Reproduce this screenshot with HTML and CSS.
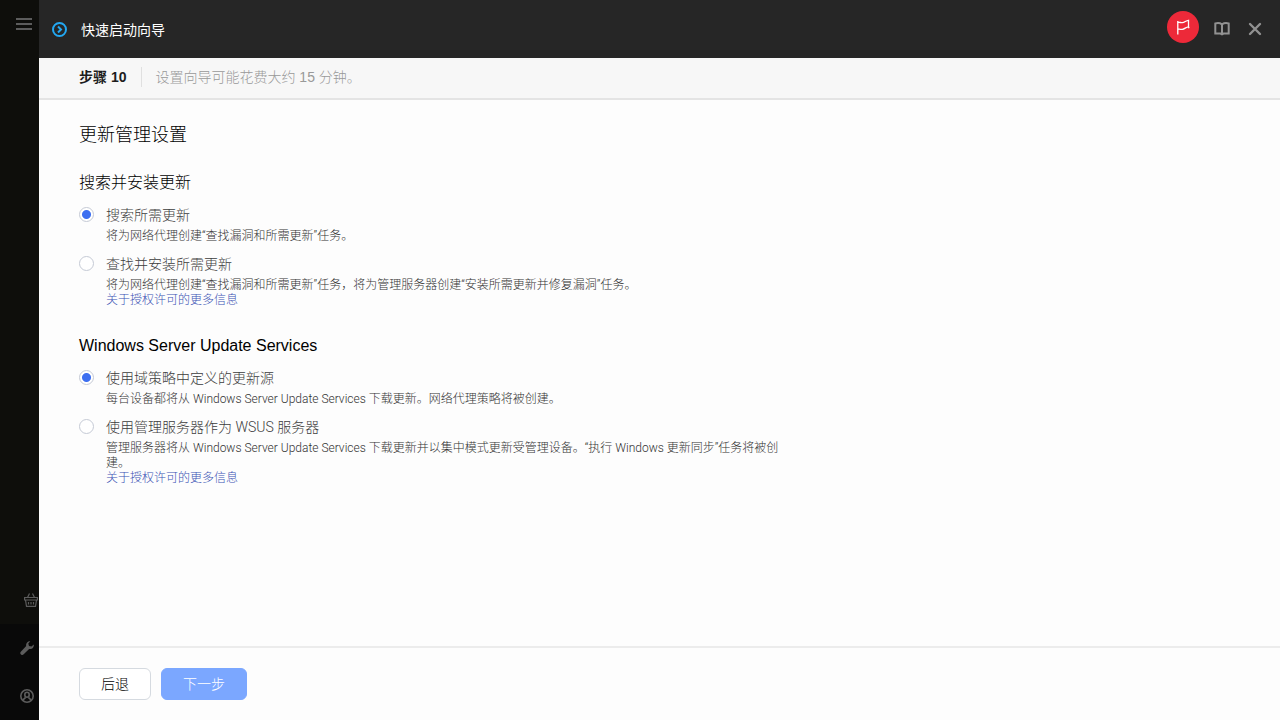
FILE: index.html
```html
<!DOCTYPE html>
<html lang="zh-CN">
<head>
  <meta charset="UTF-8">
  <meta name="viewport" content="width=device-width, initial-scale=1.0">
  <title>快速启动向导</title>
  <link rel="stylesheet" href="styles.css">
</head>
<body>
  <nav class="sidebar">
    <div class="sidebar-top">
      <button class="icon-btn menu-btn" type="button" aria-label="菜单">
        <svg width="16" height="14" viewBox="0 0 16 14" fill="none" stroke="currentColor" stroke-width="2"><path d="M0 2h16M0 7h16M0 12h16"/></svg>
      </button>
      <button class="icon-btn market-btn" type="button" aria-label="市场">
        <svg width="14" height="14" viewBox="0 0 14 14" fill="none" stroke="currentColor" stroke-width="1.200"><path d="M.6 4.500h12.800v2.500H.6zM1.500 7l1 6.400h9l1-6.400M3.500 4.500l2-4M10.500 4.500l-2-4M4.500 9v2.500M7 9v2.500M9.500 9v2.500"/></svg>
      </button>
    </div>
    <div class="sidebar-bottom">
      <button class="icon-btn" type="button" aria-label="设置">
        <svg width="14" height="14" viewBox="0 0 14 14" fill="currentColor"><path d="M10.300.2 8.300 2.500 9 5l2.500.6 2.200-2c.6 2.300-1 4.500-3.300 4.500-.5 0-.9-.1-1.300-.2l-5.400 5.300a1.750 1.750 0 0 1-2.900-2.500L6.200 5C5.500 2.500 7.500-.2 10.300.2z"/></svg>
      </button>
      <button class="icon-btn" type="button" aria-label="帐户">
        <svg width="14" height="14" viewBox="0 0 14 14" fill="none" stroke="currentColor" stroke-width="1.600"><circle cx="7" cy="7" r="6.200"/><ellipse cx="7" cy="5.800" rx="2.200" ry="2.500"/><path d="M3.200 11.500c.4-1.700 1.400-2.400 2.500-3M10.800 11.500c-.4-1.700-1.400-2.400-2.500-3"/></svg>
      </button>
    </div>
  </nav>

  <div class="wizard">
    <header class="wizard-header">
      <svg class="wizard-icon" width="16" height="16" viewBox="0 0 16 16" fill="none" stroke="currentColor" stroke-width="2"><circle cx="8.500" cy="8.500" r="6.500"/><path d="M7 5.500l3 3-3 3"/></svg>
      <h1>快速启动向导</h1>
      <div class="header-actions">
        <button class="icon-btn flag-btn" type="button" aria-label="教程">
          <svg width="14" height="16" viewBox="0 0 14 16" fill="none" stroke="currentColor" stroke-width="1.300"><path d="M1.800 2v13.500M1.800 3.500c1.800-.6 2.800.3 4.500.2 2.500-.2 3.500-2.200 6.200-2.400v6.500c-2.700.2-3.700 2.300-6.200 2.600-1.700.2-2.700-.6-4.500 0M12.500 7.800l.5 1.500"/></svg>
        </button>
        <button class="icon-btn" type="button" aria-label="帮助">
          <svg width="16" height="14" viewBox="0 0 16 14" fill="none" stroke="currentColor" stroke-width="2"><path d="M8 2.300C6 1 3.500.8 1.300 1.500v10h5.200l1.500.8 1.500-.8h5.200v-10C12.500.8 10 1 8 2.300zM8 2.300V12"/></svg>
        </button>
        <button class="icon-btn" type="button" aria-label="关闭">
          <svg width="14" height="14" viewBox="0 0 14 14" fill="none" stroke="currentColor" stroke-width="2.400" stroke-linecap="round"><path d="M2 2l10 10M12 2L2 12"/></svg>
        </button>
      </div>
    </header>

    <div class="step-bar">
      <span class="step">步骤 10</span>
      <span class="step-hint">设置向导可能花费大约 15 分钟。</span>
    </div>

    <main class="content">
      <h2>更新管理设置</h2>

      <section class="group" role="radiogroup" aria-labelledby="updates-title">
        <h3 id="updates-title">搜索并安装更新</h3>
        <div class="option">
          <input type="radio" name="updates" id="find" checked>
          <div class="option-body">
            <label for="find">搜索所需更新</label>
            <p>将为网络代理创建“查找漏洞和所需更新”任务。</p>
          </div>
        </div>
        <div class="option">
          <input type="radio" name="updates" id="install">
          <div class="option-body">
            <label for="install">查找并安装所需更新</label>
            <p>将为网络代理创建“查找漏洞和所需更新”任务，将为管理服务器创建“安装所需更新并修复漏洞”任务。</p>
            <a href="#">关于授权许可的更多信息</a>
          </div>
        </div>
      </section>

      <section class="group" role="radiogroup" aria-labelledby="wsus-title">
        <h3 id="wsus-title">Windows Server Update Services</h3>
        <div class="option">
          <input type="radio" name="wsus" id="domain" checked>
          <div class="option-body">
            <label for="domain">使用域策略中定义的更新源</label>
            <p>每台设备都将从 Windows Server Update Services 下载更新。网络代理策略将被创建。</p>
          </div>
        </div>
        <div class="option">
          <input type="radio" name="wsus" id="server">
          <div class="option-body">
            <label for="server">使用管理服务器作为 WSUS 服务器</label>
            <p>管理服务器将从 Windows Server Update Services 下载更新并以集中模式更新受管理设备。“执行 Windows 更新同步”任务将被创建。</p>
            <a href="#">关于授权许可的更多信息</a>
          </div>
        </div>
      </section>
    </main>

    <footer class="wizard-footer">
      <button class="btn" type="button">后退</button>
      <button class="btn btn-primary" type="button">下一步</button>
    </footer>
  </div>
</body>
</html>
```
FILE: styles.css
```css
* { box-sizing: border-box; margin: 0; padding: 0; }
body {
  font-family: "Liberation Sans", "Noto Sans CJK SC", sans-serif;
  font-size: 14px;
  line-height: 20px;
  color: #1d1d1d;
  background: #fdfdfd;
  display: flex;
  min-height: 100vh;
}
button {
  font-family: inherit;
  cursor: pointer;
}
svg {
  display: block;
}
.icon-btn {
  display: flex;
  align-items: center;
  justify-content: center;
  background: none;
  border: none;
  color: inherit;
}

/* sidebar */
.sidebar {
  flex: 0 0 39px;
  display: flex;
  flex-direction: column;
  background: #0e0e0b;
  color: #5c5c5c;
}
.sidebar-top {
  flex: 1;
  display: flex;
  flex-direction: column;
  justify-content: space-between;
  align-items: flex-end;
  padding: 17px 1px 17px 0;
}
.menu-btn {
  margin-right: 6px;
}
.sidebar-bottom {
  display: flex;
  flex-direction: column;
  align-items: flex-end;
  gap: 34px;
  padding: 17px 5px;
  background: #090909;
}

/* wizard */
.wizard {
  flex: 1;
  min-width: 0;
  display: flex;
  flex-direction: column;
}
.wizard-header {
  display: flex;
  align-items: center;
  height: 58px;
  padding: 0 18px 0 12px;
  background: #262626;
  color: #fff;
}
.wizard-icon {
  color: #23a8f2;
  margin-right: 14px;
}
.wizard-header h1 {
  padding-top: 2px;
  font-size: 14px;
  font-weight: 400;
}
.header-actions {
  display: flex;
  align-items: center;
  gap: 18px;
  margin-left: auto;
  color: #919191;
}
.flag-btn {
  width: 32px;
  height: 32px;
  margin: 0 -3px 4px 0;
  border-radius: 50%;
  background: #ed2939;
  color: #fff;
}
.step-bar {
  display: flex;
  align-items: center;
  height: 42px;
  padding: 0 40px 2px;
  background: #f7f7f7;
  border-bottom: 2px solid #e4e4e4;
}
.step {
  font-weight: 600;
  padding-right: 15px;
}
.step-hint {
  font-weight: 300;
  color: #999;
  padding-left: 13px;
  border-left: 1px solid #e0e0e0;
}
.content {
  flex: 1;
  padding: 23px 40px;
}
.content h2 {
  font-size: 18px;
  font-weight: 300;
  line-height: 24px;
  color: #000;
}
.content h3 {
  font-size: 16px;
  font-weight: 300;
  line-height: 24px;
  margin-bottom: 10px;
  color: #000;
}
.group {
  margin-top: 24px;
}
.group + .group {
  margin-top: 26px;
}

/* radio options */
.option {
  display: flex;
  align-items: flex-start;
  gap: 12px;
  margin-bottom: 10px;
  font-family: Roboto, "Noto Sans CJK SC", sans-serif;
  font-weight: 300;
}
.option input {
  appearance: none;
  flex: none;
  width: 15px;
  height: 15px;
  margin-top: 2px;
  border: 1px solid #c5cad5;
  border-radius: 50%;
  background: #fff;
}
.option input:checked {
  background: radial-gradient(circle, #3d6ff0 4px, #fff 5px);
}
.option-body {
  max-width: 680px;
}
.option label {
  display: block;
  color: #3c3c3c;
}
.option p {
  margin-top: 4px;
  font-size: 12px;
  line-height: 15px;
  color: #333;
}
.option a {
  display: block;
  font-size: 12px;
  line-height: 15px;
  color: #3a52b4;
  text-decoration: none;
}

/* footer */
.wizard-footer {
  display: flex;
  gap: 10px;
  padding: 20px 40px;
  border-top: 2px solid #ececec;
}
.btn {
  height: 32px;
  padding: 0 21px 2px;
  font-size: 14px;
  font-weight: 300;
  color: #000;
  background: #fff;
  border: 1px solid #d5dae0;
  border-radius: 6px;
}
.btn-primary {
  color: #fff;
  background: #7ba7ff;
  border-color: #7ba7ff;
}
```
